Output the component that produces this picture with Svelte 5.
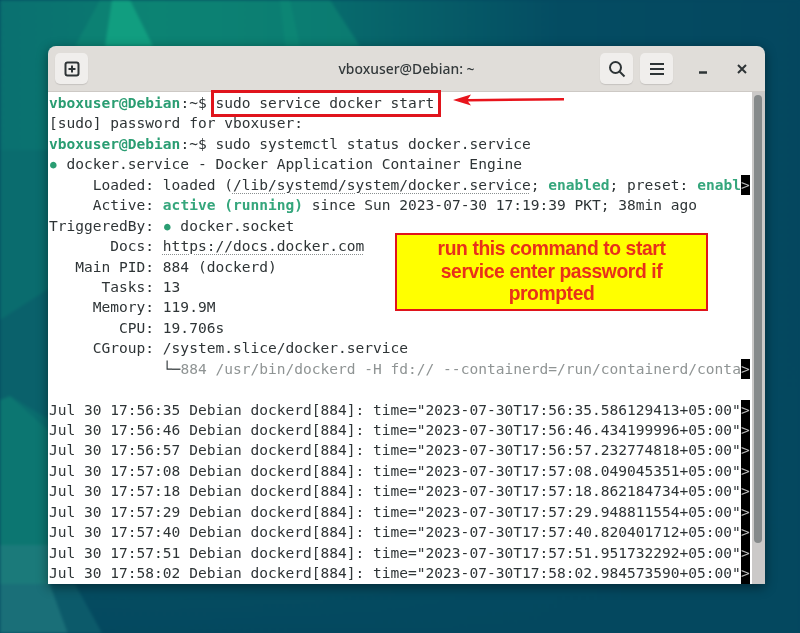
<script lang="ts">
  const logs = [
    ['17:56:35', '17:56:35.586129413'],
    ['17:56:46', '17:56:46.434199996'],
    ['17:56:57', '17:56:57.232774818'],
    ['17:57:08', '17:57:08.049045351'],
    ['17:57:18', '17:57:18.862184734'],
    ['17:57:29', '17:57:29.948811554'],
    ['17:57:40', '17:57:40.820401712'],
    ['17:57:51', '17:57:51.951732292'],
    ['17:58:02', '17:58:02.984573590'],
  ];
</script>

<svg class="wallpaper" viewBox="0 0 800 633" preserveAspectRatio="none" aria-hidden="true">
  <defs>
    <linearGradient id="wall" x1="0" y1="0" x2="1" y2="0">
      <stop offset="0" stop-color="#0a7070" />
      <stop offset="0.2" stop-color="#0a7a70" />
      <stop offset="0.42" stop-color="#076a6c" />
      <stop offset="0.7" stop-color="#044c62" />
      <stop offset="1" stop-color="#04475f" />
    </linearGradient>
    <linearGradient id="low" x1="0" y1="0" x2="0" y2="1">
      <stop offset="0" stop-color="#04475f" stop-opacity="0" />
      <stop offset="1" stop-color="#04485f" />
    </linearGradient>
  </defs>
  <rect width="800" height="633" fill="url(#wall)" />
  <rect y="150" width="800" height="483" fill="url(#low)" />
  <polygon points="100,0 330,0 360,46 180,60 75,46" fill="#0f8a76" opacity="0.55" />
  <polygon points="112,0 130,0 153,46 105,46" fill="#12a182" opacity="0.9" />
  <polygon points="280,0 290,0 300,46 285,46" fill="#109078" opacity="0.4" />
  <rect y="150" width="50" height="300" fill="#0a6c6e" />
  <polygon points="0,320 50,288 50,420 10,396 0,400" fill="#0a616b" />
  <polygon points="0,400 10,396 50,432 50,545 0,545" fill="#0c7671" />
  <polygon points="0,545 50,545 50,584 0,584" fill="#1b7a7a" />
  <polygon points="0,584 50,584 68,633 0,633" fill="#1a6f78" />
  <polygon points="50,584 75,584 102,633 68,633" fill="#0c5a6a" />
</svg>

<main class="desktop">
  <section class="window">
    <header class="titlebar">
      <button class="tb-btn" aria-label="New tab">
        <svg width="16" height="16" viewBox="0 0 16 16" fill="none" stroke="#2e3436" stroke-width="2">
          <rect x="1.5" y="1.5" width="13" height="13" rx="2" />
          <path d="M8 4.5v7M4.5 8h7" />
        </svg>
      </button>
      <h1 class="title">vboxuser@Debian: ~</h1>
      <button class="tb-btn" aria-label="Search">
        <svg width="18" height="18" viewBox="0 0 18 18" fill="none" stroke="#2e3436" stroke-width="2">
          <circle cx="7.5" cy="7.5" r="5.5" />
          <path d="M11.5 11.5l5 5" />
        </svg>
      </button>
      <button class="tb-btn menu" aria-label="Menu">
        <svg width="16" height="14" viewBox="0 0 16 14" fill="none" stroke="#2e3436" stroke-width="2">
          <path d="M1 2h14M1 7h14M1 12h14" />
        </svg>
      </button>
      <div class="wm">
        <svg width="10" height="10" viewBox="0 0 10 10" fill="none" stroke="#2e3436" stroke-width="2.4">
          <path d="M1 8.5h8" />
        </svg>
        <svg width="10" height="10" viewBox="0 0 10 10" fill="none" stroke="#2e3436" stroke-width="2">
          <path d="M1 1l8 8M9 1l-8 8" />
        </svg>
      </div>
    </header>

    <div class="body">
      <div class="term">
        <div class="ln"><span class="prompt">vboxuser@Debian</span>:~$ sudo service docker start</div>
        <div class="ln">[sudo] password for vboxuser:</div>
        <div class="ln"><span class="prompt">vboxuser@Debian</span>:~$ sudo systemctl status docker.service</div>
        <div class="ln"><span class="bullet">●</span> docker.service - Docker Application Container Engine</div>
        <div class="ln"><span class="k">Loaded:</span> loaded (<span class="dot">/lib/systemd/system/docker.service</span>; <span class="ok b">enabled</span>; preset: <span class="ok b">enabl</span><span class="more">&gt;</span></div>
        <div class="ln"><span class="k">Active:</span> <span class="ok b">active (running)</span> since Sun 2023-07-30 17:19:39 PKT; 38min ago</div>
        <div class="ln"><span class="k">TriggeredBy:</span> <span class="bullet">●</span> docker.socket</div>
        <div class="ln"><span class="k">Docs:</span> <span class="dot">https://docs.docker.com</span></div>
        <div class="ln"><span class="k">Main PID:</span> 884 (dockerd)</div>
        <div class="ln"><span class="k">Tasks:</span> 13</div>
        <div class="ln"><span class="k">Memory:</span> 119.9M</div>
        <div class="ln"><span class="k">CPU:</span> 19.706s</div>
        <div class="ln"><span class="k">CGroup:</span> /system.slice/docker.service</div>
        <div class="ln"><span class="k"></span> └─<span class="dim">884 /usr/bin/dockerd -H fd:// --containerd=/run/containerd/conta</span><span class="more">&gt;</span></div>
        <div class="ln"></div>
        {#each logs as [t, stamp]}
          <div class="ln">Jul 30 {t} Debian dockerd[884]: time="2023-07-30T{stamp}+05:00"<span class="more">&gt;</span></div>
        {/each}
      </div>
      <div class="scrollbar"><div class="thumb"></div></div>
    </div>
  </section>
</main>

<div class="cmd-box"></div>
<svg class="arrow" width="112" height="14" viewBox="0 0 112 14" aria-hidden="true">
  <path d="M0 7L18 1.5 15 6 111 5 111 7.5 15 8.5 18 12.5z" fill="#e8141c" />
</svg>
<div class="note">run this command to start service enter password if prompted</div>

<style>
  :global(body) {
    margin: 0;
    background: #03475f;
  }

  .wallpaper {
    position: absolute;
    inset: 0;
    width: 800px;
    height: 633px;
    filter: blur(1.5px);
  }

  .desktop {
    position: relative;
    box-sizing: border-box;
    width: 800px;
    height: 633px;
    padding: 46px 35px 0 48px;
    overflow: hidden;
  }

  .window {
    display: flex;
    flex-direction: column;
    height: 538px;
    border-radius: 8px 8px 0 0;
    overflow: hidden;
    box-shadow: 0 3px 12px rgba(0, 0, 0, 0.45);
    filter: blur(0.4px);
  }

  .titlebar {
    display: flex;
    align-items: center;
    height: 46px;
    flex: none;
    padding: 0 0 0 7px;
    background: #e0ddd9;
    border-bottom: 1px solid #cdc9c5;
    box-sizing: border-box;
  }

  .tb-btn {
    display: flex;
    align-items: center;
    justify-content: center;
    width: 33px;
    height: 31px;
    padding: 0;
    border: 0;
    border-radius: 5px;
    background: #f0eeec;
    box-shadow: 0 1px 1px rgba(0, 0, 0, 0.12);
  }

  .menu {
    margin-left: 7px;
  }

  .title {
    flex: 1;
    margin: 0;
    padding-left: 125px;
    text-align: center;
    font: 500 13.9px "Noto Sans", sans-serif;
    color: #33393b;
  }

  .wm {
    display: flex;
    align-items: center;
    gap: 29px;
    padding: 0 18px 0 25px;
  }

  .body {
    display: flex;
    flex: 1;
    min-height: 0;
    background: #fff;
  }

  .term {
    flex: 1;
    min-width: 0;
    padding: 1px 0 0 1px;
    font: 14.55px/20.45px "DejaVu Sans Mono", monospace;
    color: #2e3436;
    overflow: hidden;
  }

  .ln {
    height: 20.45px;
    white-space: pre;
  }

  .k {
    display: inline-block;
    width: 12ch;
    text-align: right;
  }

  .prompt {
    color: #2a9d72;
    font-weight: 700;
  }

  .ok {
    color: #35a67c;
  }

  .b {
    font-weight: 700;
  }

  .bullet {
    display: inline-block;
    width: 8.76px;
    text-align: center;
    color: #2a9d72;
    font-size: 11px;
    vertical-align: 1px;
  }

  .dim {
    color: #8f9494;
  }

  .dot {
    text-decoration: underline dotted 1px #8a8f90;
    text-underline-offset: 3px;
  }

  .more {
    display: inline-block;
    height: 20.45px;
    vertical-align: top;
    background: #000;
    color: #bbb;
  }

  .scrollbar {
    flex: none;
    width: 13px;
    box-sizing: border-box;
    padding: 3px 3px 0 2px;
    background: #cbc9c8;
  }

  .thumb {
    height: 448px;
    border-radius: 4px;
    background: #868a8b;
  }

  .cmd-box {
    position: absolute;
    left: 211px;
    top: 90px;
    width: 224px;
    height: 21px;
    border: 3px solid #e0141c;
  }

  .arrow {
    position: absolute;
    left: 453px;
    top: 93px;
  }

  .note {
    position: absolute;
    left: 395px;
    top: 233px;
    box-sizing: border-box;
    width: 313px;
    height: 78px;
    padding: 3px 30px 0;
    background: #ffff00;
    border: 2px solid #e0141c;
    color: #e8301a;
    font: 700 19.3px/22.5px "Liberation Sans", sans-serif;
    letter-spacing: -0.4px;
    text-align: center;
    filter: blur(0.3px);
  }
</style>
